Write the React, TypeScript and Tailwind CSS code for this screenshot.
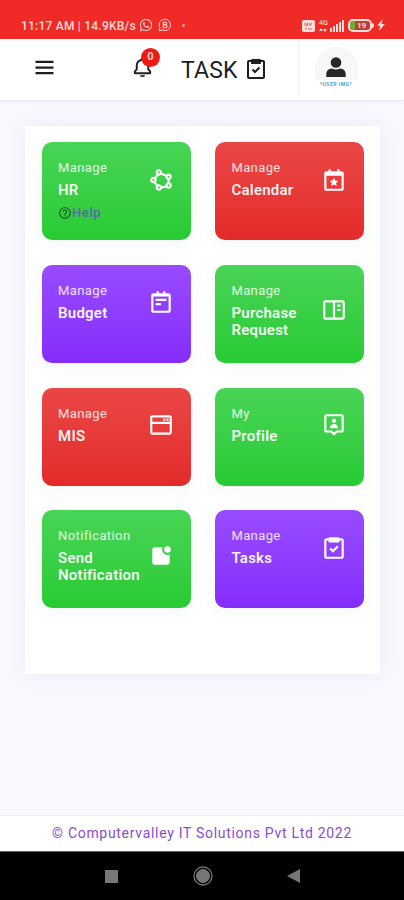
import type { IconType } from "react-icons";
import {
  BiBell,
  BiBookContent,
  BiCalendarStar,
  BiHelpCircle,
  BiMenu,
  BiNotepad,
  BiShapePolygon,
  BiSolidNotification,
  BiTask,
  BiUserPin,
  BiWindowAlt,
} from "react-icons/bi";
import { FaWhatsapp } from "react-icons/fa";

type Card = {
  label: string;
  title: string;
  icon: IconType;
  color: keyof typeof colors;
  help?: boolean;
};

const colors = {
  green: "from-[#48d455] to-[#27cb33]",
  red: "from-[#ea4646] to-[#e42a2a]",
  purple: "from-[#984bff] to-[#852cfb]",
};

const cards: Card[] = [
  { label: "Manage", title: "HR", icon: BiShapePolygon, color: "green", help: true },
  { label: "Manage", title: "Calendar", icon: BiCalendarStar, color: "red" },
  { label: "Manage", title: "Budget", icon: BiNotepad, color: "purple" },
  { label: "Manage", title: "Purchase Request", icon: BiBookContent, color: "green" },
  { label: "Manage", title: "MIS", icon: BiWindowAlt, color: "red" },
  { label: "My", title: "Profile", icon: BiUserPin, color: "green" },
  { label: "Notification", title: "Send Notification", icon: BiSolidNotification, color: "green" },
  { label: "Manage", title: "Tasks", icon: BiTask, color: "purple" },
];

function StatusBar() {
  return (
    <div className="flex h-[39px] items-start bg-[#f02a27] pl-[21px] pr-[19px] pt-[18px] text-[#ffdcd8]">
      <span className="whitespace-nowrap text-[12px] font-medium leading-[16px] tracking-[0.22px]">
        11:17 AM | 14.9KB/s
      </span>
      <FaWhatsapp className="ml-[3px] size-[14px]" />
      <svg viewBox="0 0 14 14" className="ml-[5px] size-[14px]" fill="none" stroke="currentColor">
        <path d="M1.2 12.8l.7-3A5.7 5.7 0 1 1 4.3 12z" />
        <path d="M5.3 4.2h2a1.3 1.3 0 0 1 0 2.7h-2zm0 2.7h2.3a1.4 1.4 0 0 1 0 2.8H5.3z" strokeWidth="1.1" />
      </svg>
      <span className="ml-[10px] mt-[6px] size-[3px] rounded-full bg-[#ff9d98]" />
      <div className="ml-auto flex items-start">
        <svg viewBox="0 0 13 12" className="mt-[2px] h-3 w-[13px]">
          <rect width="13" height="12" rx="2" fill="#ffdcd8" />
          <path d="M3 6V3l2.5 3V3M7 3l1.3 3L9.7 3M3 9l2-1.5M6 8l2 2M8 8l2 1.5" fill="none" stroke="#d96c67" />
        </svg>
        <div className="ml-[4px] flex h-[14px] w-[25px] items-end gap-px">
          <div className="flex flex-col items-start">
            <span className="text-[7px] font-medium leading-[7px]">4G</span>
            <svg viewBox="0 0 8 5" className="h-[5px] w-2" fill="currentColor">
              <path d="M0 4l2-3 2 3zM4 2h4L6 5z" />
            </svg>
          </div>
          <div className="ml-auto flex items-end gap-[1px]">
            <span className="h-[4px] w-[2px] bg-current" />
            <span className="h-[6px] w-[2px] bg-current" />
            <span className="h-[8px] w-[2px] bg-current" />
            <span className="h-[10px] w-[2px] bg-current" />
            <span className="h-[12px] w-[2px] bg-current" />
          </div>
        </div>
        <div className="ml-[4px] mt-px flex items-center">
          <div className="flex h-[13px] w-6 items-stretch rounded-[5px] border-2 border-current bg-[#bb3e37]">
            <span className="w-[5px] rounded-l-sm bg-[#67b32e]" />
            <span className="pl-[2px] text-[8px] font-bold leading-[9px]">19</span>
          </div>
          <span className="h-[5px] w-[2px] rounded-r-sm bg-current" />
        </div>
        <svg viewBox="0 0 8 12" className="ml-[3px] mt-px h-3 w-2" fill="currentColor">
          <path d="M5.6 0L.2 6.7h3L2.1 12 7.8 5H4.5z" />
        </svg>
      </div>
    </div>
  );
}

function Header() {
  return (
    <header className="flex h-[62px] items-start border-b border-[#eceef5] bg-white text-[#1e1e22] shadow-[0_1px_3px_rgba(70,80,140,0.06)]">
      <BiMenu className="ml-[31px] mt-[15px] size-[27px]" />
      <div className="relative ml-[73px] mt-[17px]">
        <BiBell className="size-[23px]" />
        <span className="absolute -top-2 left-[10px] flex size-[19px] items-center justify-center rounded-full bg-[#ee1b12] text-[11px] font-bold text-[#ffd5d0]">
          0
        </span>
      </div>
      <h1 className="ml-[27px] mt-[16px] flex w-[117px] items-center text-[23px] leading-8 tracking-[0.2px]">
        TASK
        <BiTask className="mb-[5px] ml-[6px] size-6" />
      </h1>
      <div className="flex h-[58px] flex-1 flex-col items-center border-l border-[#f5f5f7] pr-[31px] pt-[8px]">
        <div className="flex h-[33px] w-[43px] items-end justify-center overflow-hidden rounded-t-[21px] bg-[#f7f7f7]">
          <svg viewBox="0 0 20 20" className="mb-[3px] size-5" fill="#272729">
            <circle cx="10" cy="5.5" r="5.3" />
            <path d="M.3 20v-2.5c0-3.6 2.2-5.7 5.5-5.9 2.5 1.3 5.9 1.3 8.4 0 3.3.2 5.5 2.3 5.5 5.900V20z" />
          </svg>
        </div>
        <span className="mt-px whitespace-nowrap text-[5px] font-bold leading-[6px] tracking-[0.5px] text-[#45a9c8]">
          *USER IMG*
        </span>
      </div>
    </header>
  );
}

function TaskCard({ label, title, icon: Icon, color, help }: Card) {
  return (
    <div
      className={`flex h-[98px] items-start justify-between rounded-[10px] bg-linear-to-b pl-4 pr-[17px] pt-[17px] text-white shadow-[0_4px_18px_rgba(60,90,100,0.05)] ${colors[color]}`}
    >
      <div className="w-[84px]">
        <p className="text-[13px] leading-[18px] tracking-[0.4px] text-white/85">{label}</p>
        <h2 className="mt-[5px] text-[15px] font-semibold leading-[17px] tracking-[0.25px] text-white/95">{title}</h2>
        {help && (
          <a href="#" className="mt-[5px] flex items-center text-[13px] font-medium leading-[17px] tracking-[0.6px] text-[#5b67a8]">
            <BiHelpCircle className="size-[14px] text-[#185c20]" />
            Help
          </a>
        )}
      </div>
      <Icon className={title.includes(" ") ? "mt-[15.5px] size-[26px]" : "mt-[7.5px] size-[26px]"} />
    </div>
  );
}

function NavBar() {
  return (
    <div className="flex h-[49px] items-center justify-center border-t border-[#666] bg-black text-[#777]">
      <span className="size-[13px] bg-current" />
      <svg viewBox="0 0 20 20" className="ml-[75px] size-5" fill="none" stroke="currentColor">
        <circle cx="10" cy="10" r="9" strokeWidth="1.3" />
        <circle cx="10" cy="10" r="6.5" fill="currentColor" />
      </svg>
      <svg viewBox="0 0 13 14" className="ml-[74px] h-[14px] w-[13px]" fill="currentColor">
        <path d="M0 7L13 0v14z" />
      </svg>
    </div>
  );
}

export default function App() {
  return (
    <div className="flex h-[900px] w-[404px] flex-col overflow-hidden bg-[#f8f9fe] font-['Roboto',sans-serif]">
      <StatusBar />
      <Header />
      <main className="flex-1 px-[25px] pt-[25px]">
        <div className="mr-[-1px] h-[548px] bg-white px-[17px] pt-4 shadow-[0_0_20px_rgba(60,70,110,0.07)]">
          <div className="grid grid-cols-[149px_149px] gap-x-[24.4px] gap-y-[24.8px]">
            {cards.map((card) => (
              <TaskCard key={card.title} {...card} />
            ))}
          </div>
        </div>
      </main>
      <footer className="flex h-9 items-center justify-center border-t border-[#f1f1f5] bg-white text-[14px] tracking-[0.7px] text-[#8a4bd0]">
        © Computervalley IT Solutions Pvt Ltd 2022
      </footer>
      <NavBar />
    </div>
  );
}
